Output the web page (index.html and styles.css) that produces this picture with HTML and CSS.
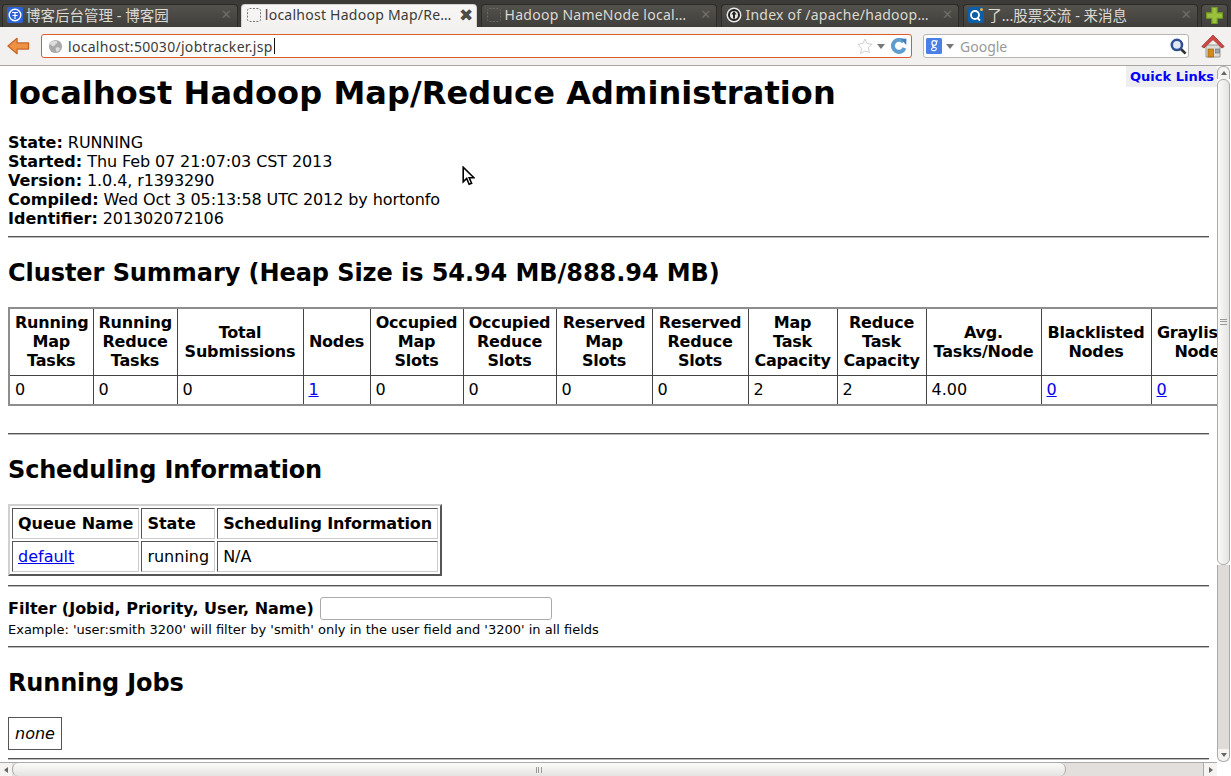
FILE: index.html
```html
<!DOCTYPE html>
<html lang="en">
<head>
<meta charset="utf-8">
<title>localhost Hadoop Map/Reduce Administration</title>
<link rel="stylesheet" href="styles.css">
</head>
<body>
<div class="browser">
  <div class="tabbar">
    <div class="tab t1">
      <svg class="favicon" viewBox="0 0 16 16"><rect width="16" height="16" rx="2" fill="#2b62d8"/><circle cx="8" cy="8" r="5.8" fill="none" stroke="#fff" stroke-width="1.4"/><path d="M5 5.500h6M8 5.500v6.500M5.500 8.500h5" stroke="#fff" stroke-width="1.200" fill="none"/></svg>
      <span class="tab-label cjk">博客后台管理 - 博客园</span>
      <span class="tab-x">✕</span>
    </div>
    <div class="tab t2 active">
      <svg class="favicon" viewBox="0 0 16 16"><rect x="1.500" y="1.500" width="13" height="13" rx="2" fill="none" stroke="#777" stroke-dasharray="2 1.400"/></svg>
      <span class="tab-label">localhost Hadoop Map/Re…</span>
      <span class="tab-x">✖</span>
    </div>
    <div class="tab t3">
      <svg class="favicon" viewBox="0 0 16 16"><rect x="1.500" y="1.500" width="13" height="13" rx="2" fill="none" stroke="#6b6a66" stroke-dasharray="2 1.400"/></svg>
      <span class="tab-label">Hadoop NameNode local…</span>
      <span class="tab-x">✕</span>
    </div>
    <div class="tab t4">
      <svg class="favicon" viewBox="0 0 16 16"><circle cx="8" cy="8" r="7.500" fill="#e8e8e4"/><circle cx="8" cy="8" r="5" fill="none" stroke="#222" stroke-width="2"/><path d="M8 4l2.600 3.400H9v4.200H7V7.400H5.400z" fill="#222"/></svg>
      <span class="tab-label">Index of /apache/hadoop…</span>
      <span class="tab-x">✕</span>
    </div>
    <div class="tab t5">
      <svg class="favicon" viewBox="0 0 16 16"><rect width="16" height="16" rx="2" fill="#0b5ea8"/><circle cx="7" cy="8" r="4" fill="none" stroke="#fff" stroke-width="1.800"/><path d="M9 10.500l3 3" stroke="#fff" stroke-width="1.800"/><circle cx="13.500" cy="2.500" r="1.500" fill="#f5b324"/></svg>
      <span class="tab-label cjk">了...股票交流 - 来消息</span>
      <span class="tab-x">✕</span>
    </div>
    <div class="tab newtab">
      <svg class="plus" viewBox="0 0 16 16"><path d="M5.500 0.500h5v5h5v5h-5v5h-5v-5h-5v-5h5z" fill="#9bc03f" stroke="#6f9a22"/></svg>
    </div>
  </div>

  <div class="toolbar">
    <svg class="back" viewBox="0 0 24 18"><path d="M10.500 1L1 9l9.500 8v-4.800h12V5.800h-12z" fill="#ee9142" stroke="#c4662a" stroke-width="1.300" stroke-linejoin="round"/></svg>
    <div class="urlbar">
      <svg class="globe" viewBox="0 0 16 16"><circle cx="8" cy="8" r="7" fill="#a9a9a9"/><path d="M5 2.500c2-1 5-.5 5 1S8 5 7.500 6.500 5 8 3 6.500 3.500 3 5 2.500zM9 9c2-.5 4 0 3.500 2s-2 3-3 2.500S7.500 9.500 9 9z" fill="#dcdcdc"/></svg>
      <span class="url">localhost:50030/jobtracker.jsp</span><span class="caret"></span>
      <span class="spacer"></span>
      <svg class="star" viewBox="0 0 16 16"><path d="M8 1l2.100 4.600 5 .6-3.700 3.400 1 4.900L8 13l-4.400 2.500 1-4.900L.9 6.200l5-.6z" fill="#fff" stroke="#ccd0d2"/></svg>
      <span class="drop"></span>
      <svg class="reload" viewBox="0 0 16 16"><path d="M12.500 4A6 6 0 1 0 13.500 10" fill="none" stroke="#5f9cd0" stroke-width="4"/><path d="M9.500 .5l6 .3-.3 6.200z" fill="#3f7fbb"/></svg>
    </div>
    <div class="searchbar">
      <svg class="gicon" viewBox="0 0 16 16"><rect width="16" height="16" rx="1.500" fill="#4a7fe8"/><circle cx="8.200" cy="5" r="2.300" fill="none" stroke="#fff" stroke-width="1.200"/><path d="M10 3h2M6.800 7.200c-1 1 .2 1.500 1.700 2s2.500 1 1.500 2.500-4.800 1.200-4.500-.5 2.500-1.700 3-1.700" fill="none" stroke="#fff" stroke-width="1.100"/></svg>
      <span class="drop"></span>
      <span class="search-hint">Google</span>
      <span class="spacer"></span>
      <svg class="mag" viewBox="0 0 16 16"><circle cx="6.500" cy="6.500" r="4.800" fill="#dfe8f4" stroke="#2e4f94" stroke-width="2.400"/><path d="M10.500 10.500l4.200 4.200" stroke="#333" stroke-width="2.600"/></svg>
    </div>
    <svg class="home" viewBox="0 0 24 24"><path d="M5 11h14v12H5z" fill="#dedcd8" stroke="#9a9892"/><path d="M.8 12.500L12 1l11.200 11.500-2.200 1.500L12 5.500 3 14z" fill="#cd4a45" stroke="#9b2f2b" stroke-width=".8"/><path d="M12 5.500L5 12v-1.500L12 3.500l7 7V12z" fill="#cd4a45"/><rect x="7" y="15" width="5.500" height="8" fill="#d48a1c" stroke="#8a5a12" stroke-width=".6"/><rect x="14.500" y="15" width="4" height="4" fill="#9aa7b0" stroke="#6d6d6d" stroke-width=".6"/></svg>
  </div>

  <div class="viewport">
    <div class="page-clip">
      <main class="page">
        <h1>localhost Hadoop Map/Reduce Administration</h1>
        <div class="meta">
          <b>State:</b> RUNNING<br>
          <b>Started:</b> Thu Feb 07 21:07:03 CST 2013<br>
          <b>Version:</b> 1.0.4, r1393290<br>
          <b>Compiled:</b> Wed Oct 3 05:13:58 UTC 2012 by hortonfo<br>
          <b>Identifier:</b> 201302072106
        </div>
        <hr>
        <h2 class="cluster-title">Cluster Summary (Heap Size is 54.94 MB/888.94 MB)</h2>
        <table class="summary">
          <colgroup>
            <col class="c84"><col class="c84"><col class="c126"><col class="c67"><col class="c93"><col class="c93"><col class="c96"><col class="c96"><col class="c89"><col class="c89"><col class="c115"><col class="c110"><col class="c102">
          </colgroup>
          <tr>
            <th>Running Map Tasks</th><th>Running Reduce Tasks</th><th>Total Submissions</th><th>Nodes</th>
            <th>Occupied Map Slots</th><th>Occupied Reduce Slots</th><th>Reserved Map Slots</th><th>Reserved Reduce Slots</th>
            <th>Map Task Capacity</th><th>Reduce Task Capacity</th><th>Avg. Tasks/Node</th><th>Blacklisted Nodes</th><th>Graylisted Nodes</th>
          </tr>
          <tr>
            <td>0</td><td>0</td><td>0</td><td><a href="#">1</a></td><td>0</td><td>0</td><td>0</td><td>0</td><td>2</td><td>2</td><td>4.00</td><td><a href="#">0</a></td><td><a href="#">0</a></td>
          </tr>
        </table>
        <hr class="after-summary">
        <h2>Scheduling Information</h2>
        <table class="queues">
          <tr><th>Queue Name</th><th>State</th><th>Scheduling Information</th></tr>
          <tr><td><a href="#">default</a></td><td>running</td><td>N/A</td></tr>
        </table>
        <hr class="after-queues">
        <form class="filter">
          <b>Filter (Jobid, Priority, User, Name)</b>
          <input class="filter-input" type="text">
          <div class="example">Example: 'user:smith 3200' will filter by 'smith' only in the user field and '3200' in all fields</div>
        </form>
        <hr class="after-filter">
        <h2>Running Jobs</h2>
        <table class="none-table"><tr><td><i>none</i></td></tr></table>
        <hr class="after-none">
      </main>
      <a class="quick-links" href="#">Quick Links</a>
      <svg class="pointer" viewBox="0 0 13 20"><path d="M1.200 1.200v14.600l3.500-3.300 2.400 5.800 2.500-1-2.400-5.600h4.700z" fill="#fff" stroke="#000" stroke-width="1.600"/></svg>
    </div>
    <div class="vscroll">
      <span class="sb-btn vtop"><i class="arrow up"></i></span>
      <span class="vthumb"><i class="grip-h"></i></span>
      <span class="vtrack"></span>
      <span class="sb-btn vbot"><i class="arrow down"></i></span>
    </div>
    <div class="hscroll">
      <span class="sb-btn hleft"><i class="arrow left"></i></span>
      <span class="hthumb"><i class="grip-v"></i></span>
      <span class="htrack"></span>
      <span class="sb-btn hright"><i class="arrow right"></i></span>
    </div>
    <div class="corner"></div>
  </div>
</div>
</body>
</html>
```

FILE: styles.css
```css
* { box-sizing: border-box; }
html, body { margin: 0; padding: 0; height: 100%; overflow: hidden; background: #fff; }

.browser { display: flex; flex-direction: column; width: 1231px; height: 776px; }

/* tab strip */
.tabbar { display: flex; height: 27px; padding: 4px 3px 0 2px; gap: 3px; background: #3c3b37; flex: none; }
.tab {
  display: flex; align-items: center; height: 23px; padding: 0 5px 3px 4px;
  border-radius: 4px 4px 0 0; border: 1px solid #2c2b28; border-bottom: 0;
  background: linear-gradient(#54524d, #3f3e3a);
  color: #dcd9d2; font: 14px "Noto Sans", sans-serif; letter-spacing: .25px; white-space: nowrap;
}
.tab.active { background: linear-gradient(#f8f7f6, #f2f1f0); color: #3c3b37; border-color: #d5d3cf; padding-right: 2px; }
.t1, .t2 { width: 236px; }
.t3 { width: 237px; margin-left: 1px; }
.t4 { width: 238px; margin-left: 1px; }
.t5 { width: 235px; margin-left: 1px; }
.newtab { width: 27px; justify-content: center; padding: 0 0 1px; }
.favicon { width: 16px; height: 16px; flex: none; margin-right: 3px; }
.plus { width: 17px; height: 17px; }
.tab-label { flex: 1; overflow: hidden; }
.cjk { font-family: "Noto Sans", "Noto Sans CJK SC", sans-serif; font-size: 14.5px; letter-spacing: 0; }
.tab-x { color: #6f6e69; font-size: 13px; font-family: "DejaVu Sans", sans-serif; }
.active .tab-x { color: #4c4b47; font-size: 17px; }

/* toolbar */
.toolbar {
  display: flex; align-items: center; height: 39px; padding: 0 6px 0 7px; flex: none;
  background: #f2f1f0; border-bottom: 1px solid #a8a6a2;
}
.back { width: 23px; height: 18px; margin-right: 11px; flex: none; }
.urlbar, .searchbar {
  display: flex; align-items: center; height: 24px; background: #fff; border-radius: 3px;
  font: 14px "Noto Sans", sans-serif;
}
.urlbar { width: 871px; border: 1px solid #dc5a2c; padding: 0 4px 0 6px; }
.searchbar { width: 266px; margin-left: 11px; border: 1px solid #b8b6b1; padding: 0 1px 0 2px; }
.globe { width: 15px; height: 15px; margin-right: 5px; flex: none; }
.url { color: #3c3b37; letter-spacing: .3px; }
.caret { display: inline-block; width: 1px; height: 16px; background: #111; margin-left: 1px; }
.spacer { flex: 1; }
.star { width: 16px; height: 16px; flex: none; }
.drop { width: 0; height: 0; margin: 0 4px; border: 4px solid transparent; border-top: 5px solid #777; border-bottom: 0; flex: none; }
.reload { width: 16px; height: 16px; flex: none; margin-left: 2px; }
.gicon { width: 16px; height: 16px; flex: none; }
.search-hint { color: #999; margin-left: 2px; }
.mag { width: 17px; height: 17px; flex: none; }
.home { width: 24px; height: 24px; margin-left: 12px; flex: none; }

/* viewport and scrollbars */
.viewport { flex: 1; min-height: 0; display: grid; grid-template-columns: 1fr 14px; grid-template-rows: 1fr 14px; background: #fff; }
.page-clip { position: relative; overflow: hidden; min-width: 0; }
.page { padding: 9px 8px 8px; font: 16px/19px "DejaVu Sans", sans-serif; color: #000; width: 1217px; }
.page h1 { margin: 0 0 21px; font-size: 32px; line-height: 37px; font-weight: bold; letter-spacing: .08px; }
.page h2 { margin: 21px 0 20px; font-size: 24px; line-height: 28px; font-weight: bold; letter-spacing: -.16px; }
.page .cluster-title { letter-spacing: -.065px; }
.page hr { margin: 8px 0; border: 0; border-top: 1px solid #555; border-bottom: 1px solid #bbb; height: 2px; }
.page a { color: #0000ee; }
.meta { letter-spacing: -.1px; }
.meta b { letter-spacing: 0; }

.summary { table-layout: fixed; width: 1244px; border-collapse: collapse; border: 2px solid #8d8d8d; border-right: 0; }
.summary th, .summary td { border: 1px solid #444; padding: 4px 5px 5px; overflow: hidden; }
.summary th { text-align: center; letter-spacing: -.2px; }
.summary td { text-align: left; }
.c67 { width: 67px; } .c84 { width: 84px; } .c89 { width: 89px; } .c93 { width: 93px; }
.c96 { width: 96px; } .c102 { width: 102px; } .c110 { width: 110px; } .c115 { width: 115px; } .c126 { width: 126px; }

.page .after-summary { margin-top: 27px; }

.queues { border: 2px solid; border-color: #d0d0d0 #555 #555 #d0d0d0; border-spacing: 2px; }
.queues th, .queues td { padding: 5px; border: 1px solid; border-color: #555 #ccc #ccc #555; text-align: left; }
.queues th:last-child { letter-spacing: -.13px; }

.page .after-queues { margin-top: 9px; }
.filter b { vertical-align: middle; }
.filter { line-height: 19px; padding-top: 2px; }
.filter-input { width: 232px; height: 23px; margin: 0 0 0 1px; border: 1px solid #aaa; border-radius: 3px; background: #fff; vertical-align: middle; }
.example { font-size: 13px; line-height: 15px; margin-top: 2px; }
.page .after-filter { margin-top: 9px; }

.none-table { border: 1px solid #555; border-spacing: 0; }
.none-table td { padding: 6px; border: 0; }
.page .after-none { margin-top: 8px; }

.quick-links {
  position: absolute; top: 0; right: 0; width: 91px; height: 21px; padding: 3px 0 0 4px;
  background: #eeeeee; color: #0000ff; font: bold 13px/16px "DejaVu Sans", sans-serif; text-decoration: none; white-space: nowrap;
}
.pointer { position: absolute; left: 462px; top: 100px; width: 13px; height: 20px; }

.vscroll { grid-column: 2; grid-row: 1 / span 2; display: flex; flex-direction: column; margin: 0 1px 0 0; padding: 0 0 14px; background: #fff; }
.hscroll { grid-column: 1; grid-row: 2; display: flex; background: #e2dfdc; border-top: 1px solid #aaa; }
.corner { display: none; }
.sb-btn { display: flex; align-items: center; justify-content: center; flex: none; background: #f5f4f3; }
.vtop, .vbot { height: 13px; border: 1px solid #aaa; }
.vtop { border-radius: 6px 6px 0 0; border-bottom: 0; }
.vbot { border-radius: 0 0 6px 6px; border-top: 0; }
.hleft { width: 12px; }
.hright { width: 14px; border-left: 1px solid #aaa; }
.vthumb { height: 486px; flex: none; display: flex; align-items: center; justify-content: center; border: 1px solid #aaa; border-radius: 6px; background: linear-gradient(90deg, #fbfbfa, #e4e3e1); }
.vtrack { flex: 1; background: #dedbd8; border: 1px solid #aaa; border-width: 0 1px; }
.hthumb { width: 1054px; display: flex; align-items: center; justify-content: center; border: 1px solid #aaa; border-width: 0 1px; border-radius: 6px; background: linear-gradient(#fbfbfa, #e4e3e1); }
.htrack { flex: 1; }
.grip-h { width: 7px; height: 6px; background: repeating-linear-gradient(#999 0 1px, transparent 1px 2.500px); }
.grip-v { width: 7px; height: 6px; background: repeating-linear-gradient(90deg, #999 0 1px, transparent 1px 2.500px); }
.arrow { width: 0; height: 0; border: 3px solid transparent; }
.arrow.up { border-bottom: 4px solid #666; border-top: 0; }
.arrow.down { border-top: 4px solid #666; border-bottom: 0; }
.arrow.left { border-right: 4px solid #666; border-left: 0; }
.arrow.right { border-left: 4px solid #666; border-right: 0; }
```
